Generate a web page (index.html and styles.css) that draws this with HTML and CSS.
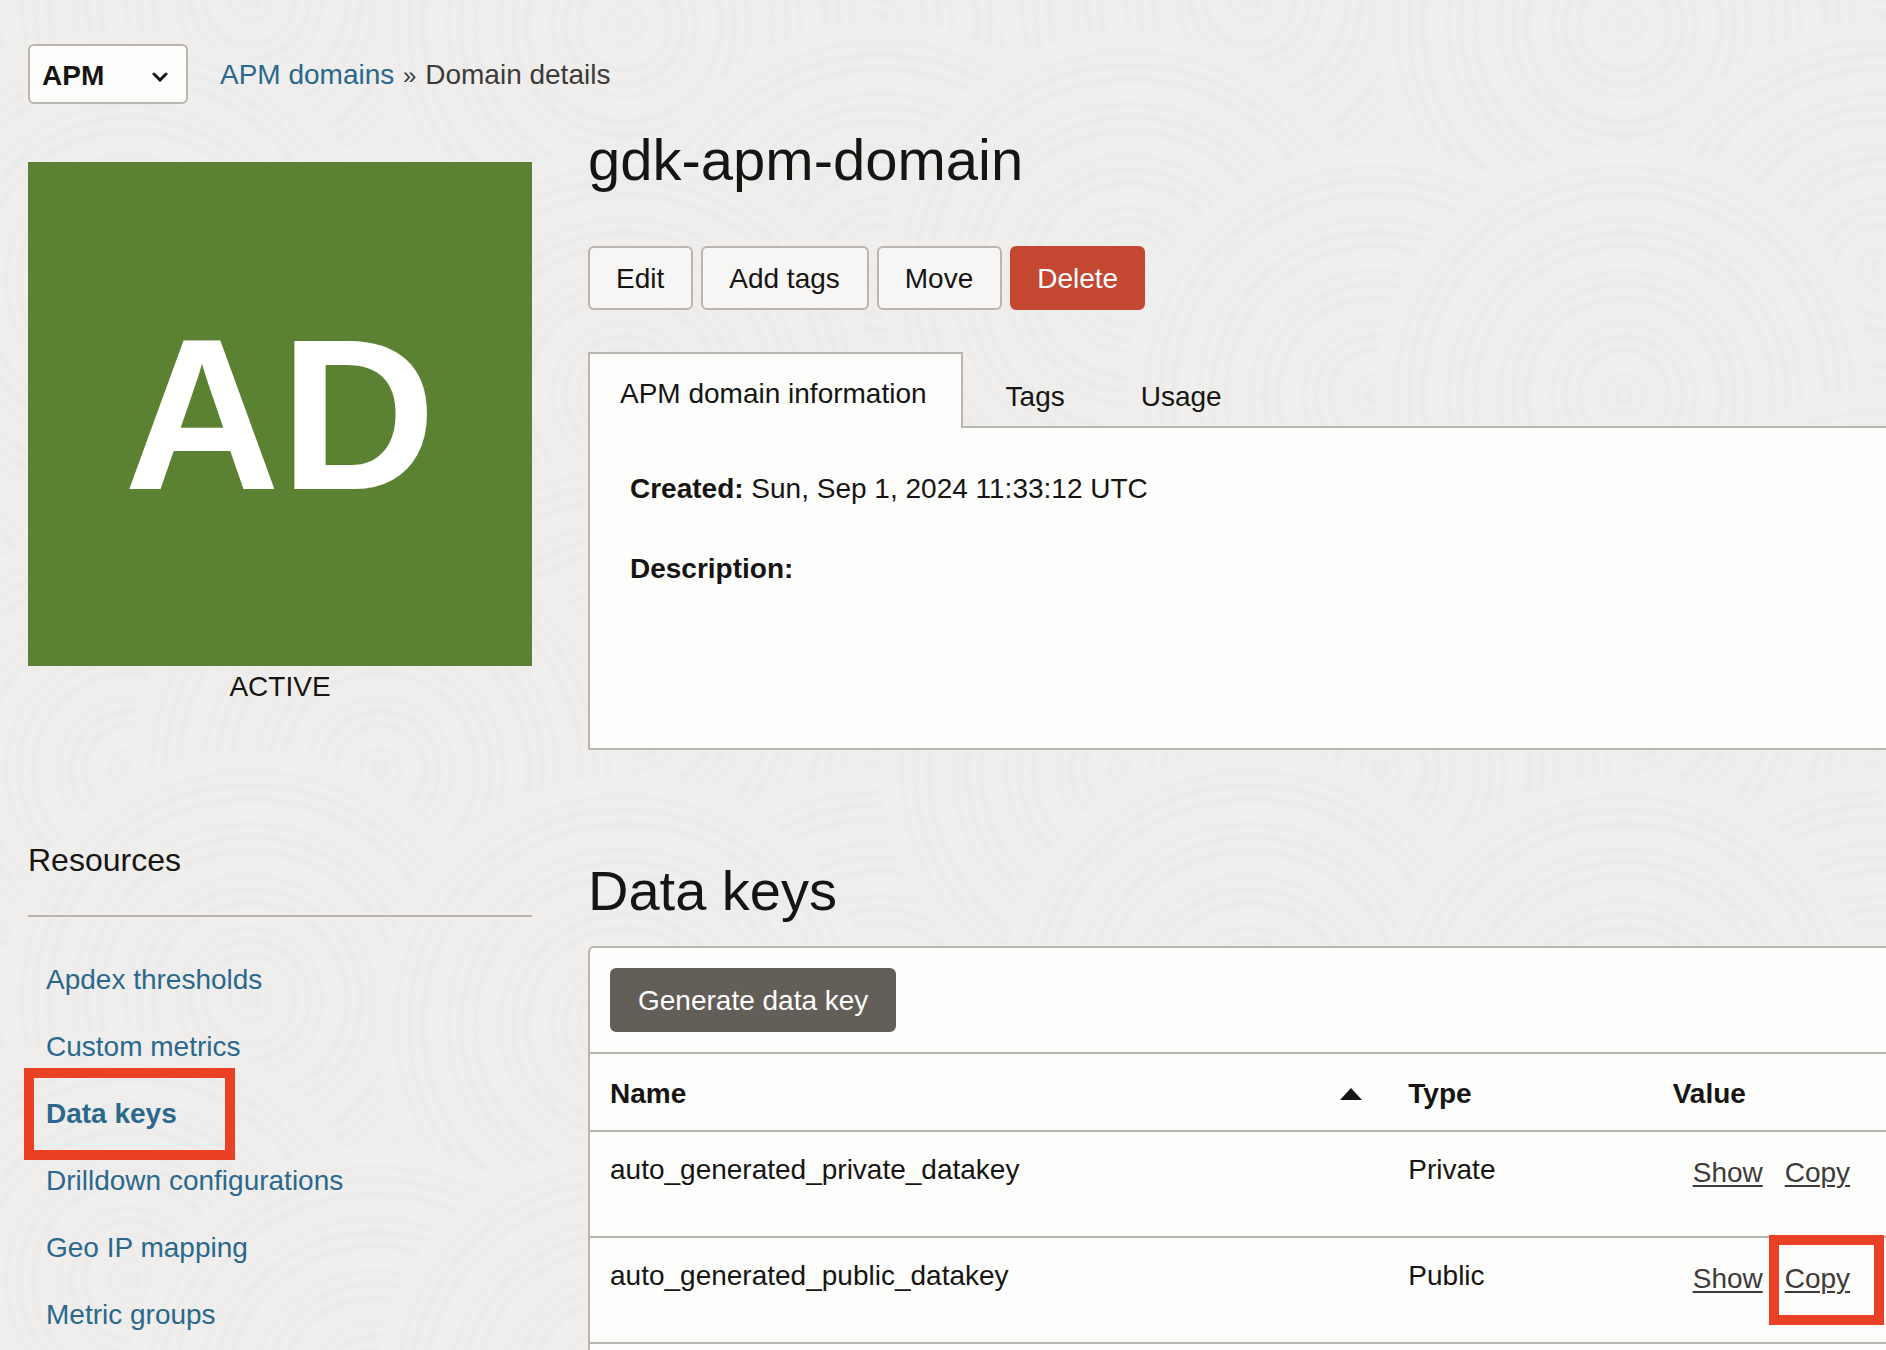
FILE: index.html
```html
<!DOCTYPE html>
<html lang="en">
<head>
<meta charset="utf-8">
<meta name="viewport" content="width=device-width, initial-scale=1">
<title>gdk-apm-domain</title>
<link rel="stylesheet" href="styles.css">
</head>
<body>
<header class="topbar">
  <div class="service">
    <select class="service-select" aria-label="Service">
      <option>APM</option>
    </select>
    <svg class="service-chevron" width="16" height="10" viewBox="0 0 16 10" aria-hidden="true"><path d="M2 2l6 6 6-6" fill="none" stroke="#161513" stroke-width="3" stroke-linecap="round"/></svg>
  </div>
  <nav class="breadcrumb" aria-label="Breadcrumb"><a class="link" href="#domains">APM domains</a> <span class="separator">»</span> Domain details</nav>
</header>

<div class="layout">
  <aside class="side">
    <div class="badge">AD</div>
    <p class="status">ACTIVE</p>
    <h2 class="side-title">Resources</h2>
    <ul class="resources">
      <li><a class="link" href="#apdex">Apdex thresholds</a></li>
      <li><a class="link" href="#metrics">Custom metrics</a></li>
      <li class="current"><a class="link" href="#keys" aria-current="page">Data keys</a></li>
      <li><a class="link" href="#drilldown">Drilldown configurations</a></li>
      <li><a class="link" href="#geo">Geo IP mapping</a></li>
      <li><a class="link" href="#groups">Metric groups</a></li>
    </ul>
  </aside>

  <main class="content">
    <h1 class="page-title">gdk-apm-domain</h1>
    <div class="actions">
      <button class="button" type="button">Edit</button>
      <button class="button" type="button">Add tags</button>
      <button class="button" type="button">Move</button>
      <button class="button danger" type="button">Delete</button>
    </div>

    <div class="tabs" role="tablist">
      <button class="tab active" type="button" role="tab" aria-selected="true">APM domain information</button>
      <button class="tab" type="button" role="tab" aria-selected="false">Tags</button>
      <button class="tab" type="button" role="tab" aria-selected="false">Usage</button>
    </div>
    <section class="details" role="tabpanel">
      <p class="detail"><b>Created:</b> Sun, Sep 1, 2024 11:33:12 UTC</p>
      <p class="detail"><b>Description:</b></p>
    </section>

    <h2 class="section-title" id="keys">Data keys</h2>
    <section class="keys">
      <div class="toolbar">
        <button class="button primary" type="button">Generate data key</button>
      </div>
      <table class="keys-table">
        <colgroup><col class="col-name"><col class="col-type"><col></colgroup>
        <thead>
          <tr>
            <th scope="col" aria-sort="ascending"><div class="sortable">Name
              <svg width="22" height="12" viewBox="0 0 22 12" aria-hidden="true"><path d="M0 12L11 0l11 12z" fill="#161513"/></svg></div></th>
            <th scope="col">Type</th>
            <th scope="col">Value</th>
          </tr>
        </thead>
        <tbody>
          <tr>
            <td>auto_generated_private_datakey</td>
            <td>Private</td>
            <td><div class="value-links"><a href="#show">Show</a><a href="#copy">Copy</a></div></td>
          </tr>
          <tr>
            <td>auto_generated_public_datakey</td>
            <td>Public</td>
            <td><div class="value-links"><a href="#show">Show</a><a class="marked" href="#copy">Copy</a></div></td>
          </tr>
        </tbody>
      </table>
    </section>
  </main>
</div>
</body>
</html>
```
FILE: styles.css
```css
:root {
  --ink: #161513;
  --muted: #3d3b39;
  --line: #bab5b0;
  --paper: #fdfdfc;
  --link: #2a688d;
  --mark: #ea4025;
}

*,
*::before,
*::after {
  box-sizing: border-box;
}

body {
  margin: 0;
  color: var(--ink);
  font: 28px/32px "Liberation Sans", Arial, sans-serif;
  background: #f0efed url("data:image/svg+xml,%3Csvg xmlns='http://www.w3.org/2000/svg' xmlns:xlink='http://www.w3.org/1999/xlink' width='1000' height='1000'%3E%3Cdefs%3E%3CradialGradient id='g' gradientUnits='userSpaceOnUse' cx='0' cy='0' r='52' spreadMethod='repeat'%3E%3Cstop offset='0' stop-color='%23f0efed'/%3E%3Cstop offset='.14' stop-color='%23ecebe9'/%3E%3Cstop offset='.25' stop-color='%23f0efed'/%3E%3Cstop offset='.38' stop-color='%23edecea'/%3E%3Cstop offset='.5' stop-color='%23f0efed'/%3E%3Cstop offset='.62' stop-color='%23eeedeb'/%3E%3Cstop offset='.75' stop-color='%23f0efed'/%3E%3Cstop offset='.86' stop-color='%23ecebe9'/%3E%3Cstop offset='1' stop-color='%23f0efed'/%3E%3C/radialGradient%3E%3Ccircle id='c' r='250' fill='url(%23g)'/%3E%3Cg id='t'%3E%3Cuse xlink:href='%23c' x='130' y='280'/%3E%3Cuse xlink:href='%23c' x='880' y='270'/%3E%3Cuse xlink:href='%23c' x='375' y='395'/%3E%3Cuse xlink:href='%23c' x='624' y='395'/%3E%3Cuse xlink:href='%23c' x='880' y='640'/%3E%3Cuse xlink:href='%23c' x='624' y='700'/%3E%3Cuse xlink:href='%23c' x='130' y='770'/%3E%3Cuse xlink:href='%23c' x='380' y='770'/%3E%3Cuse xlink:href='%23c' x='250' y='1000'/%3E%3Cuse xlink:href='%23c' x='880' y='1020'/%3E%3Cuse xlink:href='%23c' x='624' y='1025'/%3E%3C/g%3E%3C/defs%3E%3Cuse xlink:href='%23t' x='-1000' y='-1000'/%3E%3Cuse xlink:href='%23t' y='-1000'/%3E%3Cuse xlink:href='%23t' x='1000' y='-1000'/%3E%3Cuse xlink:href='%23t' x='-1000'/%3E%3Cuse xlink:href='%23t'/%3E%3Cuse xlink:href='%23t' x='1000'/%3E%3C/svg%3E");
}

h1,
h2,
p,
ul {
  margin: 0;
  padding: 0;
  font-weight: normal;
}

button,
select {
  font: inherit;
  color: inherit;
}

.link {
  color: var(--link);
  text-decoration: none;
}

/* Top bar */
.topbar {
  display: flex;
  align-items: center;
  gap: 32px;
  padding: 44px 28px 24px;
}

.service {
  position: relative;
}

.service-select {
  display: block;
  appearance: none;
  width: 160px;
  height: 60px;
  padding: 4px 40px 0 12px;
  border: 2px solid var(--line);
  border-radius: 6px;
  background: var(--paper);
  font-weight: bold;
}

.service-chevron {
  position: absolute;
  right: 20px;
  top: 28px;
  pointer-events: none;
}

.breadcrumb {
  padding-top: 2px;
  color: var(--muted);
}

.separator {
  margin: 0 1px;
  font-size: 24px;
}

/* Two-column page body */
.layout {
  display: grid;
  grid-template-columns: 504px minmax(0, 1fr);
  gap: 56px;
  padding-left: 28px;
}

.side {
  padding-top: 34px;
}

.badge {
  display: flex;
  align-items: center;
  justify-content: center;
  aspect-ratio: 1;
  background: #5b8232;
  color: #fff;
  font-size: 216px;
  font-weight: bold;
}

.status {
  line-height: 42px;
  text-align: center;
}

.side-title {
  margin: 132px 0 29px;
  padding-bottom: 35px;
  border-bottom: 2px solid var(--line);
  font-size: 32px;
  line-height: 40px;
}

.resources {
  list-style: none;
  line-height: 67px;
}

.resources li {
  padding-left: 18px;
}

.resources .current {
  position: relative;
  font-weight: bold;
}

.resources .current::after {
  content: "";
  position: absolute;
  inset: -12px auto -13px -4px;
  width: 211px;
  border: 10px solid var(--mark);
  pointer-events: none;
}

/* Domain heading and actions */
.page-title {
  font-size: 58px;
  line-height: 64px;
}

.actions {
  display: flex;
  gap: 8px;
  margin: 54px 0 42px;
}

.button {
  height: 64px;
  padding: 2px 27px 0 26px;
  border: 2px solid var(--line);
  border-radius: 6px;
  background: #f7f6f4;
}

.danger {
  padding: 2px 25px 0;
  border-color: #c44732;
  background: #c44732;
  color: #fff;
}

.primary {
  padding: 2px 26px 0;
  border-color: #645e59;
  background: #645e59;
  color: #fff;
}

/* Tabs */
.tabs {
  display: flex;
  height: 76px;
  margin-bottom: -2px;
}

.tab {
  padding: 29px 38px 15px;
  border: 0;
  background: none;
}

.tab.active {
  position: relative;
  margin-right: 5px;
  padding: 24px 34px 20px 30px;
  border: 2px solid var(--line);
  border-bottom: 0;
  background: var(--paper);
}

.details {
  min-height: 324px;
  padding: 45px 40px;
  border: 2px solid var(--line);
  border-right: 0;
  background: var(--paper);
}

.detail + .detail {
  margin-top: 48px;
}

/* Data keys */
.section-title {
  margin: 109px 0 23px;
  font-size: 56px;
  line-height: 64px;
}

.keys {
  padding-bottom: 6px;
  border: 2px solid var(--line);
  border-width: 2px 0 0 2px;
  border-radius: 6px 0 0 0;
  background: var(--paper);
}

.toolbar {
  padding: 20px;
  border-bottom: 2px solid var(--line);
}

.toolbar .button {
  display: block;
}

.keys-table {
  width: 100%;
  border-spacing: 0;
  table-layout: fixed;
}

.col-name {
  width: 61.6%;
}

.col-type {
  width: 20.4%;
}

.keys-table th,
.keys-table td {
  padding: 22px 20px;
  border-bottom: 2px solid var(--line);
  text-align: left;
  vertical-align: top;
}

.keys-table th {
  height: 78px;
  padding: 24px 20px 20px;
}

.keys-table td {
  height: 106px;
}

.sortable {
  display: flex;
  align-items: center;
  justify-content: space-between;
  padding-right: 6px;
}

.value-links {
  display: flex;
  gap: 22px;
  padding: 3px 0 0 20px;
}

.value-links a {
  color: var(--muted);
  text-underline-offset: 3px;
  text-decoration-thickness: 2px;
}

.marked {
  position: relative;
}

.marked::after {
  content: "";
  position: absolute;
  inset: -28px -34px -30px -16px;
  border: 10px solid var(--mark);
  pointer-events: none;
}
```
